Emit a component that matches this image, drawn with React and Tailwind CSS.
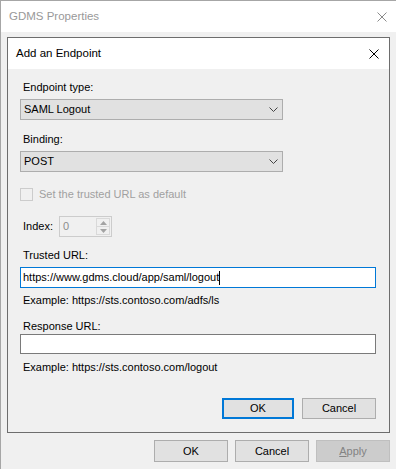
import React from "react";

const font = { fontFamily: '"Liberation Sans", Arial, sans-serif' };

function Chevron() {
  return (
    <svg width="9" height="5" viewBox="0 0 9 5" className="block">
      <path d="M0.5 0.5 L4.5 4.5 L8.5 0.5" fill="none" stroke="#444" strokeWidth="1" />
    </svg>
  );
}

function Select({ value }) {
  return (
    <div className="mt-[4px] w-[263px] h-[21px] bg-[#e1e1e1] border border-[#adadad] flex items-center justify-between pl-[3px] pr-[4px] text-black">
      <span>{value}</span>
      <Chevron />
    </div>
  );
}

function Btn({ children, primary, disabled, className = "" }) {
  return (
    <div
      className={
        "h-[21px] flex items-center justify-center " +
        (primary
          ? "border-2 border-[#0078d7] bg-[#e1e1e1] text-black "
          : disabled
          ? "border border-[#bfbfbf] bg-[#cccccc] text-[#838383] "
          : "border border-[#adadad] bg-[#e1e1e1] text-black ") +
        className
      }
    >
      {children}
    </div>
  );
}

function XIcon({ size, color }) {
  return (
    <svg width={size} height={size} viewBox={`0 0 ${size} ${size}`} className="block">
      <path d={`M0.5 0.5 L${size - 0.5} ${size - 0.5} M${size - 0.5} 0.5 L0.5 ${size - 0.5}`} stroke={color} strokeWidth="1" fill="none" />
    </svg>
  );
}

export default function App() {
  return (
    <div
      style={font}
      className="w-[396px] h-[469px] bg-[#f0f0f0] border-l border-t border-[#a6a6a6] text-[11px] leading-[15px] text-black overflow-hidden"
    >
      <div className="h-[31px] bg-white flex items-center justify-between pl-[8px] pr-[9px]">
        <span className="text-[11.5px] text-[#999999]">GDMS Properties</span>
        <XIcon size={10} color="#8a8a8a" />
      </div>
      <div className="pl-[6px] pt-[5px]">
        <div className="w-[383px] h-[396px] border border-[#6d6d6d] flex flex-col">
          <div className="h-[31px] bg-white flex items-center justify-between pl-[8px] pr-[10px] shrink-0">
            <span className="text-[11.5px]">Add an Endpoint</span>
            <XIcon size={10} color="#000" />
          </div>
          <div className="pl-[12px] pr-[13px] flex flex-col">
            <div className="mt-[11px] pl-[3px]">Endpoint type:</div>
            <Select value="SAML Logout" />
            <div className="mt-[12px] pl-[3px]">Binding:</div>
            <Select value="POST" />
            <div className="mt-[15px] h-[15px] flex items-center gap-[6px]">
              <div className="w-[13px] h-[13px] border border-[#cccccc] bg-[#f0f0f0]" />
              <span className="text-[#a0a0a0]">Set the trusted URL as default</span>
            </div>
            <div className="mt-[14px] h-[21px] flex items-center">
              <span className="pl-[3px] w-[39px]">Index:</span>
              <div className="w-[53px] h-[21px] border border-[#cccccc] bg-[#f0f0f0] flex items-center justify-between pl-[3px] pr-[1px]">
                <span className="text-[#8c8c8c]">0</span>
                <div className="w-[14px] h-[17px] flex flex-col">
                  <div className="flex-1 border border-[#d9d9d9] flex items-center justify-center">
                    <svg width="7" height="4" viewBox="0 0 7 4"><path d="M0 4 L3.5 0 L7 4 Z" fill="#a3a3a3" /></svg>
                  </div>
                  <div className="flex-1 border border-t-0 border-[#d9d9d9] flex items-center justify-center">
                    <svg width="7" height="4" viewBox="0 0 7 4"><path d="M0 0 L3.5 4 L7 0 Z" fill="#a3a3a3" /></svg>
                  </div>
                </div>
              </div>
            </div>
            <div className="mt-[11px] pl-[3px]">Trusted URL:</div>
            <div className="mt-[4px] w-[356px] h-[21px] bg-white border border-[#0078d7] flex items-center pl-[2px]">
              <span>https://www.gdms.cloud/app/saml/logout</span>
              <span className="w-[1px] h-[14px] bg-black" />
            </div>
            <div className="mt-[5px] pl-[3px]">Example: https://sts.contoso.com/adfs/ls</div>
            <div className="mt-[11px] pl-[3px]">Response URL:</div>
            <div className="w-[356px] h-[20px] bg-white border border-[#7a7a7a]" />
            <div className="mt-[6px] pl-[3px]">Example: https://sts.contoso.com/logout</div>
            <div className="mt-[23px] flex justify-end gap-[8px]">
              <Btn primary className="w-[72px]">OK</Btn>
              <Btn className="w-[74px]">Cancel</Btn>
            </div>
          </div>
        </div>
        <div className="mt-[7px] w-[383px] flex justify-end gap-[7px]">
          <Btn className="w-[74px] h-[22px]">OK</Btn>
          <Btn className="w-[74px] h-[22px]">Cancel</Btn>
          <Btn disabled className="w-[74px] h-[22px]">
            <span><span className="underline">A</span>pply</span>
          </Btn>
        </div>
      </div>
    </div>
  );
}
